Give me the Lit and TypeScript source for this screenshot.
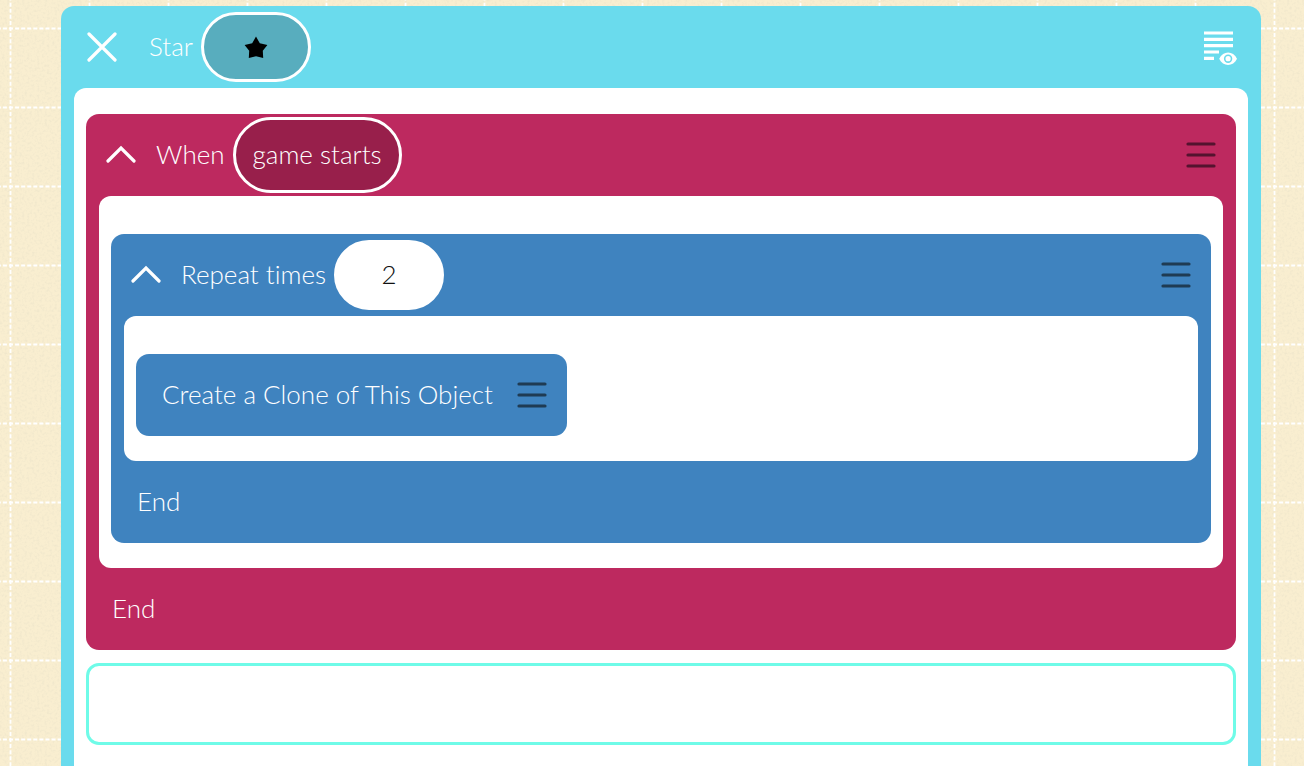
import { LitElement, html, css, svg } from "lit";
import { customElement, property } from "lit/decorators.js";

const menuIcon = svg`<svg class="icon" width="30" height="28" viewBox="0 0 30 28" aria-hidden="true">
  <path d="M2 3H28M2 14H28M2 25H28" fill="none" stroke="currentColor" stroke-width="3.2" stroke-linecap="round"/></svg>`;
const chevronIcon = svg`<svg class="icon" width="30" height="20" viewBox="0 0 30 20" aria-hidden="true">
  <path d="M2 16L15 3L28 16" fill="none" stroke="currentColor" stroke-width="3.2" stroke-linecap="round"/></svg>`;
const closeIcon = svg`<svg class="icon" width="30" height="30" viewBox="0 0 30 30" aria-hidden="true">
  <path d="M2 2L28 28M28 2L2 28" fill="none" stroke="currentColor" stroke-width="3.2" stroke-linecap="round"/></svg>`;
const previewIcon = svg`<svg class="icon" width="34" height="36" viewBox="0 -1 34 36" aria-hidden="true">
  <path d="M0 3H29M0 9.3H29M0 15.7H29M0 22H15M0 28.3H10" fill="none" stroke="currentColor" stroke-width="3.2"/>
  <path d="M15.2 28.7C19 20.4 29.2 20.4 33 28.7C29.2 37 19 37 15.2 28.7Z" fill="currentColor"/>
  <circle cx="24.1" cy="28.7" r="3.4" fill="none" stroke="#6adbed" stroke-width="1.6"/></svg>`;
const starIcon = svg`<svg class="icon" width="24" height="24" viewBox="0 -1 24 24" role="img" aria-label="Star">
  <path d="M12 .4L15.8 7.2L23.4 8.9L18.8 14.8L19.2 22L12 20.2L4.8 22L5.2 14.8L.6 8.9L8.2 7.2Z" fill="#000"/></svg>`;

const shared = css`
  * { box-sizing: border-box; }
  button, input { font: inherit; color: inherit; }
  button { background: none; border: 0; padding: 0; cursor: pointer; }
  .icon { display: block; }
  .bar { display: flex; align-items: center; height: 82px; }
  .label { padding-bottom: 2px; white-space: nowrap; }
  .body { background: #fff; border-radius: 12px; }
`;

@customElement("code-block")
class CodeBlock extends LitElement {
  @property() label = "";
  @property({ reflect: true }) kind: "event" | "action" = "action";
  @property({ type: Boolean, reflect: true }) container = false;

  static styles = [shared, css`
    :host { display: block; width: fit-content; border-radius: 13px; color: #fff; background: #3f83bf; }
    :host([container]) { width: auto; }
    :host([kind="event"]) { background: #bd295f; }
    .bar { padding: 0 20px 0 26px; }
    :host([container]) .head { padding-left: 20px; }
    .toggle { margin-right: 20px; }
    .parameter { display: flex; margin-left: 8px; }
    .menu { color: #1f3b53; margin-left: auto; padding-left: 16px; }
    :host([kind="event"]) .menu { color: #54132f; }
    .body { margin: 0 13px; padding: 38px 12px 25px; }
  `];

  render() {
    return html`
      <div class="bar head">
        ${this.container ? html`<button class="toggle" aria-label="Collapse">${chevronIcon}</button>` : ""}
        <span class="label">${this.label}</span>
        <span class="parameter"><slot name="parameter"></slot></span>
        <button class="menu" aria-label="Block menu">${menuIcon}</button>
      </div>
      ${this.container
        ? html`<div class="body"><slot></slot></div><div class="bar"><span class="label">End</span></div>`
        : ""}`;
  }
}

@customElement("app-root")
class AppRoot extends LitElement {
  static styles = [shared, css`
    :host {
      display: block; min-height: 100vh; overflow: hidden; position: relative;
      font: 300 26px/32px Lato, "Open Sans", sans-serif;
      font-variant-ligatures: none;
      background: #f9eed0;
    }
    .paper { position: absolute; inset: 0; width: 100%; height: 100%; }
    .card {
      position: relative; margin: 6px 43px 0 61px; min-height: calc(100vh - 6px);
      display: flex; flex-direction: column;
      border-radius: 13px 13px 0 0; background: #6adbed;
    }
    .title { color: #fff; padding: 0 23px 0 26px; }
    .close { margin-right: 32px; }
    .preview { margin-left: auto; }
    .pill { display: flex; align-items: center; justify-content: center; min-width: 110px; border: 3px solid #fff; border-radius: 38px; }
    .object { height: 70px; margin-left: 8px; background: #58adbe; }
    .event { height: 76px; padding: 0 17px 2px; color: #fff; background: #981f4b; }
    .count { width: 110px; height: 70px; padding: 0 0 2px; text-align: center; color: #111; background: #fff; outline: 0; }
    .script { flex: 1; margin: 0 13px; padding: 26px 12px; border-radius: 12px 12px 0 0; }
    .drop { height: 82px; margin-top: 13px; border: 3px solid #6ffbe8; border-radius: 13px; }
  `];

  render() {
    return html`
      <svg class="paper" aria-hidden="true">
        <defs>
          <filter id="grain" x="0" y="0" width="100%" height="100%">
            <feTurbulence type="fractalNoise" baseFrequency="0.4" numOctaves="2" seed="4"/>
            <feColorMatrix values="0 0 0 0 0.82  0 0 0 0 0.76  0 0 0 0 0.58  1.4 0 0 0 -0.63"/>
          </filter>
          <pattern id="grid" x="9" y="27" width="79" height="79" patternUnits="userSpaceOnUse">
            <path d="M1.5 0V79M0 1.5H79" fill="none" stroke="#fff" stroke-width="1.8" stroke-dasharray="4 2.077"/>
          </pattern>
        </defs>
        <rect width="100%" height="100%" filter="url(#grain)"/>
        <rect width="100%" height="100%" fill="url(#grid)"/>
      </svg>
      <main class="card">
        <header class="bar title">
          <button class="close" aria-label="Close">${closeIcon}</button>
          <span class="label">Star</span>
          <button class="pill object" aria-label="Choose object">${starIcon}</button>
          <button class="preview" aria-label="Preview code">${previewIcon}</button>
        </header>
        <section class="body script">
          <code-block kind="event" container label="When">
            <button slot="parameter" class="pill event">game starts</button>
            <code-block container label="Repeat times">
              <input slot="parameter" class="pill count" aria-label="Repeat times" inputmode="numeric" .value=${"2"}>
              <code-block label="Create a Clone of This Object"></code-block>
            </code-block>
          </code-block>
          <div class="drop"></div>
        </section>
      </main>`;
  }
}
